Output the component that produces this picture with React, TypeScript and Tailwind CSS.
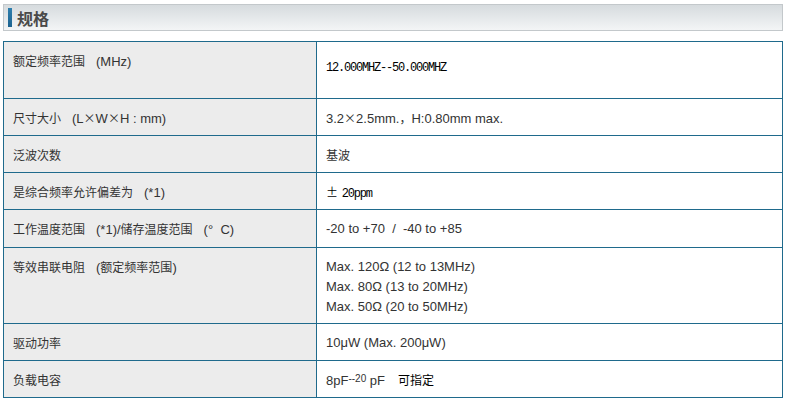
import { ReactNode } from 'react'

const latin = '"Liberation Sans", "Noto Sans CJK SC", sans-serif'
const cjkFont = '"Noto Sans CJK SC", "Liberation Sans", sans-serif'
const mono = '"Liberation Mono", "Noto Sans CJK SC", monospace'

// Latin runs are drawn at 13px, CJK runs (and ×, ±, full-width marks) at 12px
function Mixed({ text }: { text: string }) {
  const parts = text.split(/([\u3000-\u9fff\uff01-\uff07\uff09-\uffef×±]+|（)/).filter(Boolean)
  return (
    <>
      {parts.map((p, i) => {
        if (p === '（') return <span key={i} className="ml-[11px]">(</span>
        if (/^[\u3000-\u9fff\uff00-\uffef×±]+$/.test(p))
          return (
            <span key={i} className="text-[12px]" style={{ fontFamily: cjkFont }}>
              {p}
            </span>
          )
        return <span key={i}>{p}</span>
      })}
    </>
  )
}

interface Row {
  label: string
  height: number
  value: ReactNode
  valueClass?: string
}

const rows: Row[] = [
  {
    label: '额定频率范围（MHz)',
    height: 57,
    valueClass: 'pt-[15px]',
    value: (
      <span className="text-[12px] tracking-[-1.2px] text-black" style={{ fontFamily: mono }}>
        12.000MHZ--50.000MHZ
      </span>
    )
  },
  { label: '尺寸大小（L×W×H : mm)', height: 37, value: <Mixed text="3.2×2.5mm.，H:0.80mm max." /> },
  { label: '泛波次数', height: 37, value: <Mixed text="基波" /> },
  {
    label: '是综合频率允许偏差为（*1)',
    height: 37,
    value: (
      <span className="text-black">
        <span className="text-[12px]" style={{ fontFamily: cjkFont }}>±</span>{' '}
        <span className="text-[12px] tracking-[-1.2px]" style={{ fontFamily: mono }}>20ppm</span>
      </span>
    )
  },
  {
    label: '工作温度范围（*1)/储存温度范围（°\u00a0\u00a0C)',
    height: 38,
    value: <span className="whitespace-pre">-20 to +70  /  -40 to +85</span>
  },
  {
    label: '等效串联电阻（额定频率范围)',
    height: 76,
    value: (
      <>
        <div>Max. 120Ω (12 to 13MHz)</div>
        <div>Max. 80Ω (13 to 20MHz)</div>
        <div>Max. 50Ω (20 to 50MHz)</div>
      </>
    )
  },
  { label: '驱动功率', height: 37, value: '10μW (Max. 200μW)' },
  {
    label: '负载电容',
    height: 37,
    value: (
      <>
        8pF<span className="relative -top-[3px] text-[10px]">--20</span> pF
        <span className="ml-[13px] text-[12px] text-black" style={{ fontFamily: cjkFont }}>可指定</span>
      </>
    )
  }
]

export default function App() {
  return (
    <div className="w-[786px] h-[401px] bg-white px-[3px] pt-[4px]" style={{ fontFamily: latin }}>
      {/* Section header */}
      <div className="flex h-[27px] items-center border border-[#c3c8cb] bg-gradient-to-b from-[#d6dbde] to-[#f3f5f6] pl-[4px]">
        <div className="h-[19px] w-[4px] bg-gradient-to-b from-[#2f7fae] to-[#1d6390]" />
        <span className="ml-[5px] text-[16px] font-bold text-[#4a4a4a]" style={{ fontFamily: cjkFont }}>规格</span>
      </div>

      <table className="mt-[10px] w-[780px] table-fixed border-collapse text-[13px] leading-[20px] text-[#333]">
        <colgroup>
          <col className="w-[313px]" />
          <col />
        </colgroup>
        <tbody>
          {rows.map((row, i) => (
            <tr key={i} style={{ height: row.height }}>
              <td className="border border-[#1f6a8c] bg-[#ececec] pl-[9px] pt-[9px] align-top">
                <Mixed text={row.label} />
              </td>
              <td className={`border border-[#1f6a8c] bg-white pl-[9px] align-top ${row.valueClass ?? 'pt-[9px]'}`}>{row.value}</td>
            </tr>
          ))}
        </tbody>
      </table>
    </div>
  )
}
